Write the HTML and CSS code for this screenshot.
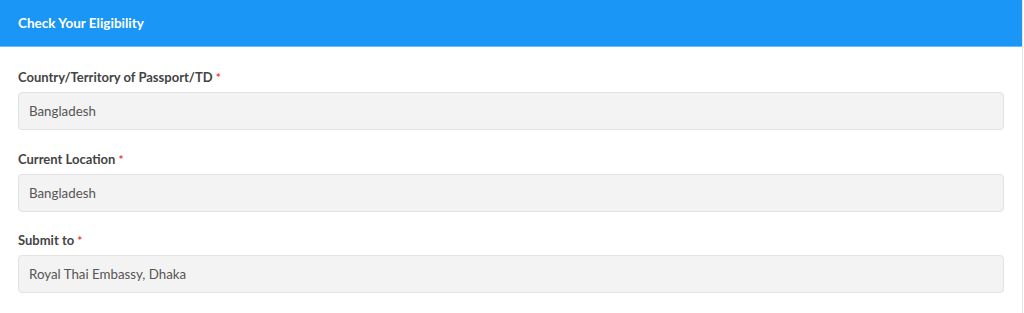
FILE: index.html
```html
<!DOCTYPE html>
<html lang="en">
<head>
    <meta charset="UTF-8">
    <meta name="viewport" content="width=device-width, initial-scale=1.0">
    <title>Check Your Eligibility</title>
    <link rel="stylesheet" href="styles.css">
</head>
<body>
    <div class="card">
        <div class="card-header">
            <h3>Check Your Eligibility</h3>
        </div>
        <div class="card-body">
            <div class="form-group">
                <label>Country/Territory of Passport/TD <span class="req">*</span></label>
                <div class="form-control">Bangladesh</div>
            </div>
            <div class="form-group">
                <label>Current Location <span class="req">*</span></label>
                <div class="form-control">Bangladesh</div>
            </div>
            <div class="form-group">
                <label>Submit to <span class="req">*</span></label>
                <div class="form-control">Royal Thai Embassy, Dhaka</div>
            </div>
        </div>
    </div>
</body>
</html>
```

FILE: styles.css
```css
body {
    font-family: Lato, 'Noto Sans', sans-serif;
    margin: 0;
    padding: 0;
    background: #fff;
}

.card {
    width: 1023px;
    border-right: 1px solid #e6e6e6;
    height: 313px;
    box-sizing: border-box;
}

.card-header {
    background-color: #1a96f6;
    border-bottom: 1px solid #6cbcf8;
    height: 46px;
    padding: 0 18px;
    display: flex;
    align-items: center;
}

.card-header h3 {
    margin: 0;
    color: #fff;
    font-size: 13.5px;
    font-weight: bold;
}

.card-body {
    padding: 21px 18px 0 18px;
    width: 986px;
}

.form-group {
    margin-bottom: 19.5px;
}

.form-group label {
    display: block;
    height: 18px;
    font-size: 13px;
    font-weight: bold;
    color: #444;
    line-height: 18px;
    margin-bottom: 6px;
}

.req {
    color: #e33;
    font-size: 12px;
    line-height: 1;
}

.form-control {
    height: 38px;
    box-sizing: border-box;
    background: #f3f3f3;
    border: 1px solid #e2e2e2;
    border-radius: 4px;
    padding: 0 10px;
    display: flex;
    align-items: center;
    font-size: 13.3px;
    color: #555;
}
```
